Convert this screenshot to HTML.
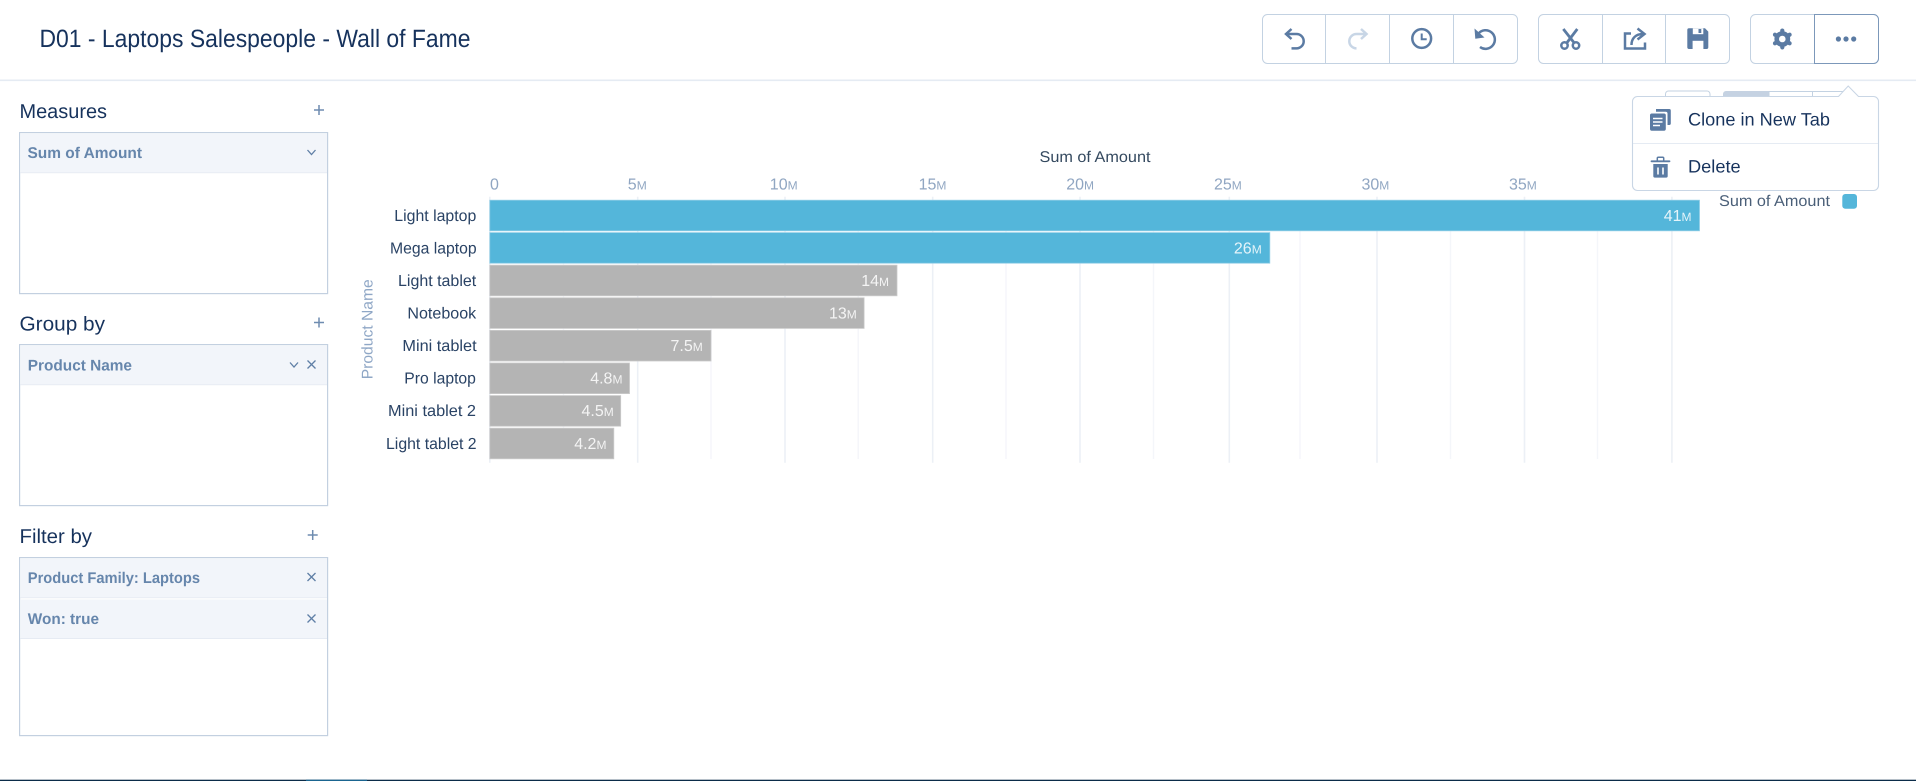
<!DOCTYPE html>
<html lang="en">
<head>
<meta charset="utf-8">
<title>D01 - Laptops Salespeople - Wall of Fame</title>
<style>
html,body{margin:0;padding:0;background:#fff;width:1916px;height:781px;overflow:hidden}
svg{display:block;position:absolute;left:0;top:0}
text{font-family:"Liberation Sans",sans-serif;text-rendering:geometricPrecision}
.t{fill:#16325c}
.h{font-size:20px;fill:#16325c}
.i{font-size:15.5px;font-weight:700;fill:#6686ac}
.c{font-size:16px;fill:#2a4365;text-anchor:start}
.x{font-size:16px;fill:#90a6c2}
.x tspan,.d tspan{font-size:12px}
.d{font-size:16px;fill:#fff;fill-opacity:.85}
.ic{fill:none;stroke:#5b7ba3;stroke-width:2.5}
.s{fill:none;stroke:#5f7fa6;stroke-width:1.3}
.g1{stroke:#ecf0f6;stroke-width:1.6}
.g2{stroke:#f4f6fa;stroke-width:1.4}
</style>
</head>
<body>
<svg width="1916" height="781" viewBox="0 0 1916 781" xmlns="http://www.w3.org/2000/svg">
<rect width="1916" height="781" fill="#fff"/>

<!-- header -->
<text x="39.5" y="47" font-size="25" class="t" textLength="431" lengthAdjust="spacingAndGlyphs">D01 - Laptops Salespeople - Wall of Fame</text>
<rect x="0" y="79.5" width="1916" height="1.6" fill="#e5ebf3"/>

<!-- toolbar groups -->
<g fill="#fff" stroke="#c3d2e2" stroke-width="1">
<rect x="1262.5" y="14.5" width="255" height="49" rx="5"/>
<path d="M1325.5 14.5V63.5M1389.5 14.5V63.5M1453.5 14.5V63.5"/>
<rect x="1538.5" y="14.5" width="191" height="49" rx="5"/>
<path d="M1602.5 14.5V63.5M1665.5 14.5V63.5"/>
<rect x="1750.5" y="14.5" width="128" height="49" rx="5"/>
</g>
<path d="M1814.5 14.5H1873.5A5 5 0 0 1 1878.5 19.5V58.5A5 5 0 0 1 1873.5 63.5H1814.5Z" fill="#fff" stroke="#7c98ba" stroke-width="1"/>

<!-- undo -->
<path class="ic" d="M1291.5 29L1286 34L1291.5 39M1286.5 34H1296.5A7.2 7.2 0 0 1 1296.5 48.4H1291.5"/>
<!-- redo -->
<path class="ic" style="stroke:#c8d6e6" d="M1361 29L1366.5 34L1361 39M1366 34H1356.5A7.2 7.2 0 0 0 1356.5 48.4H1355.5"/>
<!-- clock -->
<circle class="ic" cx="1421.7" cy="38.5" r="9.4"/>
<path class="ic" style="stroke-width:2" d="M1421.7 33.5V39.3H1426.7"/>
<!-- reset -->
<path class="ic" d="M1478.5 33.5A9.3 9.3 0 1 1 1480 47"/>
<path d="M1474.5 28.5L1475.3 38.8L1484.5 37.5Z" fill="#5b7ba3"/>
<!-- scissors -->
<path class="ic" style="stroke-width:2.8" d="M1563.3 29L1574.3 43M1577.3 29L1566.7 43"/>
<circle class="ic" cx="1564.5" cy="45.5" r="3.2"/>
<circle class="ic" cx="1576" cy="45.5" r="3.2"/>
<!-- share -->
<path class="ic" d="M1631 33.5H1625V48.5H1645V42.5"/>
<path class="ic" d="M1631.5 45C1631.5 38 1636 34 1643 34M1637.5 28.5L1644.5 34L1637.5 39.5"/>
<!-- save -->
<path d="M1689 28.3H1705L1708.3 31.6V47.3A1.7 1.7 0 0 1 1706.6 49H1689A1.7 1.7 0 0 1 1687.3 47.3V30A1.7 1.7 0 0 1 1689 28.3Z" fill="#5b7ba3"/>
<path d="M1692.8 28.3H1703.3V34.2H1692.8Z" fill="#fff"/>
<rect x="1698.5" y="29" width="2.8" height="4" fill="#5b7ba3"/>
<rect x="1692.6" y="40.8" width="10.8" height="8.2" fill="#fff"/>
<!-- gear -->
<g stroke="#5b7ba3" stroke-linecap="round">
<circle cx="1782.3" cy="39" r="5.6" fill="none" stroke-width="4.6"/>
<g stroke-width="4.2">
<path d="M1782.3 30.6V31"/><path d="M1782.3 47V47.4"/>
<path d="M1775 34.7L1775.3 34.9"/><path d="M1789.3 43.1L1789.6 43.3"/>
<path d="M1775 43.3L1775.3 43.1"/><path d="M1789.3 34.9L1789.6 34.7"/>
</g>
</g>
<!-- dots -->
<g fill="#5b7ba3"><circle cx="1838.4" cy="39" r="2.6"/><circle cx="1846" cy="39" r="2.6"/><circle cx="1853.7" cy="39" r="2.6"/></g>

<!-- left panels -->
<text class="h" x="19.5" y="118" textLength="87.5" lengthAdjust="spacingAndGlyphs">Measures</text>
<text class="h" x="19.5" y="330.7" textLength="85.5" lengthAdjust="spacingAndGlyphs">Group by</text>
<text class="h" x="19.5" y="543" textLength="72.5" lengthAdjust="spacingAndGlyphs">Filter by</text>
<g stroke="#6e8cb0" stroke-width="1.5" fill="none">
<path d="M319 105V115M314 110H324"/>
<path d="M319 317.5V327.5M314 322.5H324"/>
<path d="M312.7 530V540M307.7 535H317.7"/>
</g>
<g fill="#fff" stroke="#c3d0e0" stroke-width="1.2">
<rect x="19.6" y="132.6" width="308" height="161"/>
<rect x="19.6" y="344.6" width="308" height="161"/>
<rect x="19.6" y="557.6" width="308" height="178"/>
</g>
<g fill="#f2f5fa">
<rect x="20.2" y="133.2" width="306.8" height="39"/>
<rect x="20.2" y="345.2" width="306.8" height="39"/>
<rect x="20.2" y="558.2" width="306.8" height="39"/>
<rect x="20.2" y="599.5" width="306.8" height="38.5"/>
</g>
<g fill="#e6ebf3">
<rect x="20.2" y="172.2" width="306.8" height="1"/>
<rect x="20.2" y="384.2" width="306.8" height="1"/>
<rect x="20.2" y="597.2" width="306.8" height="1"/>
<rect x="20.2" y="638" width="306.8" height="1"/>
</g>
<text class="i" x="27.5" y="158" textLength="114.5" lengthAdjust="spacingAndGlyphs">Sum of Amount</text>
<text class="i" x="27.8" y="370.4" textLength="104.2" lengthAdjust="spacingAndGlyphs">Product Name</text>
<text class="i" x="27.8" y="583" textLength="172.2" lengthAdjust="spacingAndGlyphs">Product Family: Laptops</text>
<text class="i" x="27.8" y="624" textLength="71.2" lengthAdjust="spacingAndGlyphs">Won: true</text>
<path class="s" d="M307.5 150L311.5 154.5L315.5 150"/>
<path class="s" d="M290 362.5L294 367L298 362.5"/>
<path class="s" d="M307.5 360.5L315.5 368.5M315.5 360.5L307.5 368.5"/>
<path class="s" d="M307.5 573L315.5 581M315.5 573L307.5 581"/>
<path class="s" d="M307.5 614.5L315.5 622.5M315.5 614.5L307.5 622.5"/>

<!-- bottom bar -->
<rect x="0" y="779.7" width="1916" height="1.3" fill="#0b2c49"/>
<rect x="306" y="779.7" width="61" height="1.3" fill="#1a6590"/>

<!-- chart: grid -->
<g class="g2">
<path d="M563.5 200V459M711 200V459M858.2 200V459M1006 200V459M1153.5 200V459M1300 200V459M1450.5 200V459M1597.5 200V459"/>
</g>
<g class="g1">
<path d="M489.8 196.7V462.7M637.7 196.7V462.7M785 196.7V462.7M932.7 196.7V462.7M1080 196.7V462.7M1229.3 196.7V462.7M1377 196.7V462.7M1524.5 196.7V462.7M1671.9 196.7V462.7"/>
</g>

<!-- chart: axis -->
<text x="1039.5" y="161.8" font-size="15.5" fill="#34495f" textLength="111" lengthAdjust="spacingAndGlyphs">Sum of Amount</text>
<text class="x" x="490" y="189.5">0</text>
<text class="x" x="627.8" y="189.5">5<tspan>M</tspan></text>
<text class="x" x="769.8" y="189.5">10<tspan>M</tspan></text>
<text class="x" x="918.6" y="189.5">15<tspan>M</tspan></text>
<text class="x" x="1066.2" y="189.5">20<tspan>M</tspan></text>
<text class="x" x="1214" y="189.5">25<tspan>M</tspan></text>
<text class="x" x="1361.5" y="189.5">30<tspan>M</tspan></text>
<text class="x" x="1509" y="189.5">35<tspan>M</tspan></text>

<!-- chart: y axis title -->
<text transform="translate(372.5 379.3) rotate(-90)" font-size="15.5" fill="#8fa7c6" textLength="100" lengthAdjust="spacingAndGlyphs">Product Name</text>

<!-- chart: categories -->
<text class="c" x="394.3" y="221.2" textLength="82" lengthAdjust="spacingAndGlyphs">Light laptop</text>
<text class="c" x="390" y="253.7" textLength="86.6" lengthAdjust="spacingAndGlyphs">Mega laptop</text>
<text class="c" x="398" y="286.1" textLength="78.2" lengthAdjust="spacingAndGlyphs">Light tablet</text>
<text class="c" x="407.4" y="318.7" textLength="68.8" lengthAdjust="spacingAndGlyphs">Notebook</text>
<text class="c" x="402.4" y="351.2" textLength="74.2" lengthAdjust="spacingAndGlyphs">Mini tablet</text>
<text class="c" x="404.3" y="383.7" textLength="71.6" lengthAdjust="spacingAndGlyphs">Pro laptop</text>
<text class="c" x="388" y="416.2" textLength="88" lengthAdjust="spacingAndGlyphs">Mini tablet 2</text>
<text class="c" x="386" y="448.8" textLength="90.6" lengthAdjust="spacingAndGlyphs">Light tablet 2</text>

<!-- chart: bars -->
<g stroke-width="0.8">
<rect x="489.8" y="200.2" width="1209.7" height="30.6" fill="#54b6da" stroke="#8fcde6"/>
<rect x="489.8" y="232.6" width="780" height="30.6" fill="#54b6da" stroke="#8fcde6"/>
<rect x="489.8" y="265.2" width="407.2" height="30.6" fill="#b4b4b4" stroke="#cacaca"/>
<rect x="489.8" y="297.8" width="374.3" height="30.6" fill="#b4b4b4" stroke="#cacaca"/>
<rect x="489.8" y="330.4" width="221.2" height="30.6" fill="#b4b4b4" stroke="#cacaca"/>
<rect x="489.8" y="363" width="139.7" height="30.6" fill="#b4b4b4" stroke="#cacaca"/>
<rect x="489.8" y="395.6" width="130.9" height="30.6" fill="#b4b4b4" stroke="#cacaca"/>
<rect x="489.8" y="428.2" width="124" height="30.6" fill="#b4b4b4" stroke="#cacaca"/>
</g>
<text class="d" x="1663.7" y="221">41<tspan>M</tspan></text>
<text class="d" x="1233.9" y="253.5">26<tspan>M</tspan></text>
<text class="d" x="861.2" y="286.1">14<tspan>M</tspan></text>
<text class="d" x="829" y="318.7">13<tspan>M</tspan></text>
<text class="d" x="670.5" y="351.2">7.5<tspan>M</tspan></text>
<text class="d" x="590.2" y="383.7">4.8<tspan>M</tspan></text>
<text class="d" x="581.5" y="416.2">4.5<tspan>M</tspan></text>
<text class="d" x="574.2" y="448.8">4.2<tspan>M</tspan></text>

<!-- legend -->
<text x="1719" y="206.2" font-size="15.5" fill="#4a5f78" textLength="111" lengthAdjust="spacingAndGlyphs">Sum of Amount</text>
<rect x="1842.3" y="194" width="14.7" height="14.7" rx="3" fill="#54b6da"/>

<!-- hidden view buttons behind popover -->
<path d="M1665.5 98V94A3 3 0 0 1 1668.5 91H1707A3 3 0 0 1 1710 94V98" fill="#fff" stroke="#c3d2e2"/>
<path d="M1723 98V94A3 3 0 0 1 1726 91H1769V98Z" fill="#c5d2e2"/>
<path d="M1769 91.5H1845M1812.5 91.5V98M1769 91.5V98" fill="none" stroke="#c3d2e2"/>

<!-- popover -->
<path d="M1637.5 96.5H1838.5L1848.2 86L1858.5 96.5H1873.5A5 5 0 0 1 1878.5 101.5V185.5A5 5 0 0 1 1873.5 190.5H1637.5A5 5 0 0 1 1632.5 185.5V101.5A5 5 0 0 1 1637.5 96.5Z" fill="#fff" stroke="#c9d6e5" stroke-width="1.1"/>
<rect x="1633" y="143" width="245" height="1" fill="#e5ebf3"/>
<text x="1688" y="125.5" font-size="18" class="t" textLength="142" lengthAdjust="spacingAndGlyphs">Clone in New Tab</text>
<text x="1688" y="172.5" font-size="18" class="t" textLength="52.7" lengthAdjust="spacingAndGlyphs">Delete</text>

<!-- clone icon -->
<path d="M1656 109H1669.2A1.6 1.6 0 0 1 1670.8 110.6V123.5A1.6 1.6 0 0 1 1669.2 125H1667.5V113.5A1.8 1.8 0 0 0 1665.7 111.7H1656Z" fill="#5b7ba3"/>
<rect x="1650" y="113.5" width="15.8" height="17.2" rx="1.8" fill="#5b7ba3"/>
<path d="M1653 118.5H1662.5M1653 122H1662.5M1653 125.5H1660" stroke="#fff" stroke-width="1.5" fill="none"/>
<!-- trash icon -->
<path d="M1651.5 161.3H1669.5" stroke="#5b7ba3" stroke-width="1.8" stroke-linecap="round" fill="none"/>
<path d="M1657.3 160.5V158.2A1 1 0 0 1 1658.3 157.2H1662.7A1 1 0 0 1 1663.7 158.2V160.5" stroke="#5b7ba3" stroke-width="1.5" fill="none"/>
<path d="M1653.3 164H1667.7V176A1.6 1.6 0 0 1 1666.1 177.6H1654.9A1.6 1.6 0 0 1 1653.3 176Z" fill="#5b7ba3"/>
<path d="M1658 167.5V174.5M1663 167.5V174.5" stroke="#fff" stroke-width="1.6" fill="none"/>
</svg>
</body>
</html>
